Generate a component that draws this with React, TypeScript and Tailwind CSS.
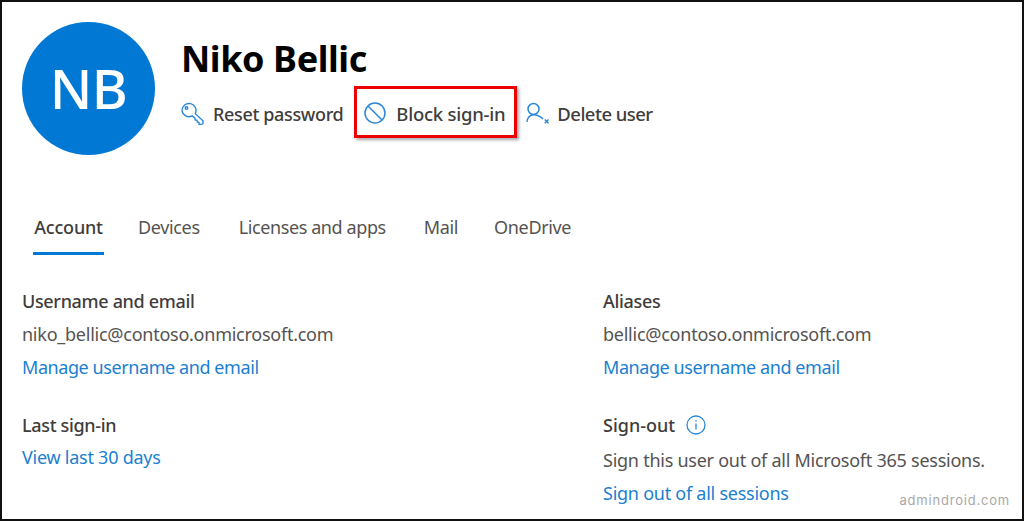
import React from "react";

const Key = () => (
  <svg width="23" height="23" viewBox="0 0 23 23" fill="none" stroke="#2b88d8" strokeWidth="1.400">
    <path d="M1 8.500a7 7 0 1 1 13.200 3.200L22 18.700v2.800l-1.500 1H18v-2l-1.700-.5-.3-1.800-1.800-.3-.2-1.700-2.800-2.300A7 7 0 0 1 1 8.500z" />
    <circle cx="5.500" cy="6" r="1.300" />
  </svg>
);
const Block = () => (
  <svg width="22" height="22" viewBox="0 0 22 22" fill="none" stroke="#2b88d8" strokeWidth="1.500">
    <circle cx="11" cy="11" r="10" />
    <path d="M4 4l14 14" />
  </svg>
);
const UserX = () => (
  <svg width="24" height="24" viewBox="0 0 24 24" fill="none" stroke="#2b88d8" strokeWidth="1.500">
    <circle cx="7.500" cy="8" r="5.500" />
    <path d="M1 21c0-3.800 2.800-7.300 6.500-7.300 3.800 0 6.800 1.500 9.500 4.300" />
    <path d="M18.800 18.500l3.700 3.700M22.500 18.500l-3.700 3.700" />
  </svg>
);
const Info = () => (
  <svg width="20" height="20" viewBox="0 0 20 20" fill="none" stroke="#2b88d8" strokeWidth="1.300">
    <circle cx="10" cy="10" r="9" />
    <path d="M10 8.500v6" />
    <path d="M10 5v1.400" />
  </svg>
);

const Link = ({ children, wide }: { children: React.ReactNode; wide?: boolean }) => (
  <div className={wide ? "text-[18px] leading-[33px] text-[#1b7fd0] tracking-[-0.25px]" : "text-[18px] leading-[33px] text-[#1b7fd0] tracking-[-0.42px]"}>{children}</div>
);
const Head = ({ children }: { children: React.ReactNode }) => (
  <div className="text-[18px] leading-[33px] font-medium text-[#3f3d3c] tracking-[-0.33px]">{children}</div>
);
const Body = ({ children }: { children: React.ReactNode }) => (
  <div className="text-[18px] leading-[33px] text-[#555351] tracking-[-0.25px] whitespace-nowrap">{children}</div>
);

export default function App() {
  return (
    <div className="relative w-[1024px] h-[521px] overflow-hidden bg-white border-2 border-[#111] font-['Noto_Sans',sans-serif] pl-[20px] pt-[20px]">
      <div className="flex items-start">
        <div className="w-[133px] h-[133px] shrink-0 rounded-full bg-[#0078d4] flex items-center justify-center text-white text-[55px] font-medium tracking-[-0.5px]">
          NB
        </div>
        <div className="ml-[26px] flex flex-col">
          <div className="text-[36px] leading-[44px] mt-[15px] font-bold text-black tracking-[-0.42px]">Niko Bellic</div>
          <div className="flex items-center mt-[16px] h-[32px] text-[18.500px] font-medium text-[#3f3d3c] whitespace-nowrap">
            <Key />
            <span className="ml-[9px] pt-[2px] text-[18px] tracking-[-0.35px]">Reset password</span>
            <div className="ml-[11px] mb-[2px] w-[163px] h-[52px] shrink-0 border-[3px] border-[#ee0000] shadow-[2px_2px_3px_rgba(0,0,0,0.35)] flex items-center pl-[7px] pt-[2px]">
              <Block />
              <span className="ml-[10px] pt-[2px] tracking-[-0.25px]">Block sign-in</span>
            </div>
            <div className="ml-[9px]"><UserX /></div>
            <span className="ml-[7px] pt-[2px] tracking-[-0.55px]">Delete user</span>
          </div>
        </div>
      </div>

      <div className="flex mt-[53px] ml-[11px] h-[47px] text-[18px] text-[#555351] tracking-[-0.35px] whitespace-nowrap">
        <div className="h-[47px] w-[71px] border-b-[3px] border-[#0078d4] font-medium text-[#3f3d3c] leading-[28px] pt-[5px] text-center tracking-[-0.2px]">Account</div>
        <div className="leading-[28px] pt-[5px] ml-[34px]">Devices</div>
        <div className="leading-[28px] pt-[5px] ml-[39px] tracking-[-0.4px]">Licenses and apps</div>
        <div className="leading-[28px] pt-[5px] ml-[38px]">Mail</div>
        <div className="leading-[28px] pt-[5px] ml-[36px]">OneDrive</div>
      </div>

      <div className="grid grid-cols-[581px_1fr] mt-[30px]">
        <div className="flex flex-col">
          <Head>Username and email</Head>
          <Body>niko_bellic@contoso.onmicrosoft.com</Body>
          <Link>Manage username and email</Link>
          <div className="mt-[25px]">
            <Head>Last sign-in</Head>
            <div className="-mt-[1px]"><Link wide>View last 30 days</Link></div>
          </div>
        </div>
        <div className="flex flex-col">
          <Head>Aliases</Head>
          <Body>bellic@contoso.onmicrosoft.com</Body>
          <Link>Manage username and email</Link>
          <div className="mt-[25px]">
            <div className="flex items-center gap-[11px]">
              <div className="text-[18px] leading-[33px] font-medium text-[#3f3d3c] tracking-[0px]">Sign-out</div>
              <div className="-mt-[2px]"><Info /></div>
            </div>
            <div className="mt-[2px]"><Body>Sign this user out of all Microsoft 365 sessions.</Body></div>
            <Link wide>Sign out of all sessions</Link>
          </div>
        </div>
      </div>

      <div className="absolute right-[12px] bottom-[9px] text-[13px] tracking-[0.8px] text-[#a8a8a8] font-['Inter',sans-serif]">admindroid.com</div>
    </div>
  );
}
